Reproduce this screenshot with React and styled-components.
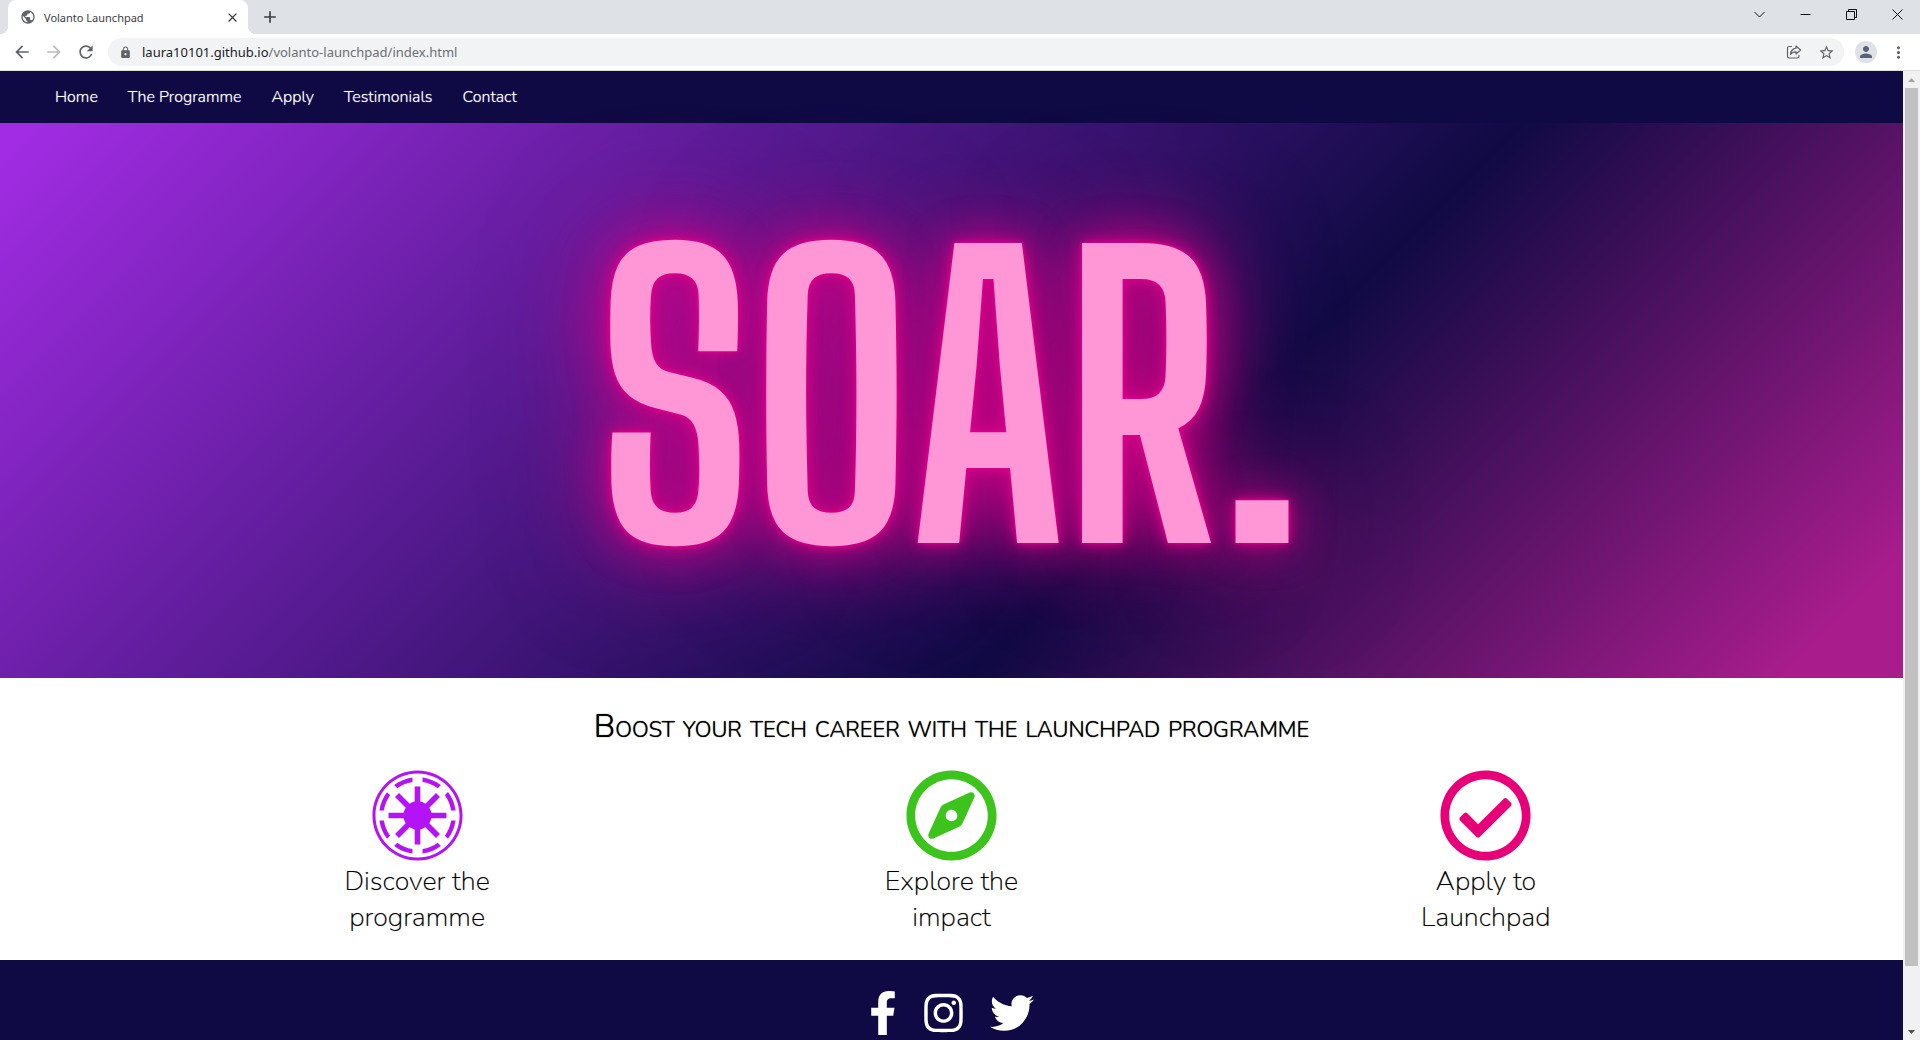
import React from 'react';
import styled, { createGlobalStyle } from 'styled-components';
import {
  MdPublic, MdClose, MdAdd, MdArrowBack, MdArrowForward, MdRefresh,
  MdLock, MdStarBorder, MdPerson, MdMoreVert,
} from 'react-icons/md';
import {
  FaGalacticRepublic, FaRegCompass, FaRegCheckCircle,
  FaFacebookF, FaInstagram, FaTwitter,
} from 'react-icons/fa';

const GlobalStyle = createGlobalStyle`
  *, *::before, *::after { box-sizing: border-box; }
  body { margin: 0; background: #fff; overflow: hidden; }
  button { border: 0; padding: 0; background: none; font: inherit; color: inherit; }
  svg { display: block; flex: none; }
`;

const uiFont = '"Noto Sans", "Open Sans", sans-serif';
const siteFont = 'Nunito, Lato, sans-serif';

const Browser = styled.div`
  display: flex;
  flex-direction: column;
  height: 100vh;
  font-family: ${uiFont};
`;

/* ---- window chrome ---- */

const TabStrip = styled.header`
  display: flex;
  flex: none;
  height: 34px;
  padding-left: 8px;
  background: #dee1e6;
`;

const Tab = styled.div`
  position: relative;
  display: flex;
  align-items: center;
  gap: 8px;
  width: 240px;
  padding: 0 8px 0 12px;
  border-radius: 8px 8px 0 0;
  background: #fff;
  color: #3c4043;
  font-size: 11px;

  &::before, &::after {
    content: '';
    position: absolute;
    bottom: 0;
    width: 8px;
    height: 8px;
  }
  &::before {
    left: -8px;
    background: radial-gradient(circle at 0 0, #dee1e6 8px, #fff 8px);
  }
  &::after {
    right: -8px;
    background: radial-gradient(circle at 100% 0, #dee1e6 8px, #fff 8px);
  }
`;

const TabTitle = styled.span`
  flex: 1;
  white-space: nowrap;
`;

const IconButton = styled.button`
  display: grid;
  place-items: center;
  flex: none;
  width: ${p => p.$size || 32}px;
  height: ${p => p.$size || 32}px;
  color: ${p => p.$color || '#5f6368'};
`;

const NewTab = styled(IconButton)`
  align-self: center;
  margin-left: 8px;
`;

const WindowControls = styled.div`
  display: flex;
  margin-left: auto;
`;

const WindowButton = styled.button`
  display: grid;
  place-items: center;
  width: 46px;
  height: 28px;
  color: #111;
`;

const Toolbar = styled.div`
  display: flex;
  flex: none;
  align-items: center;
  height: 37px;
  padding: 0 6px;
  border-bottom: 1px solid #dcdedc;
  background: #fff;
`;

const AddressBar = styled.div`
  display: flex;
  flex: 1;
  align-items: center;
  height: 28px;
  margin-left: 6px;
  padding: 0 2px 0 11px;
  border-radius: 14px;
  background: #f1f3f4;
  color: #5f6368;
`;

const Address = styled.p`
  flex: 1;
  margin: 0 0 0 10px;
  font-size: 13px;
  line-height: 20px;
  color: #6b6f74;
`;

const Host = styled.span`
  color: #202124;
`;

const Profile = styled.button`
  display: grid;
  place-items: center;
  width: 22px;
  height: 22px;
  margin: 0 5px 0 11px;
  border-radius: 50%;
  background: #dee1e6;
  color: #56617a;
`;

/* ---- page ---- */

const Viewport = styled.div`
  display: grid;
  grid-template-columns: minmax(0, 1fr) 17px;
  flex: 1;
  min-height: 0;
`;

const Page = styled.div`
  display: flex;
  flex-direction: column;
  overflow: hidden;
  font-family: ${siteFont};
`;

const Nav = styled.nav`
  flex: none;
  background: #100a44;
`;

const NavList = styled.ul`
  display: flex;
  gap: 30px;
  margin: 0;
  padding: 15px 55px;
  list-style: none;
`;

const NavLink = styled.a`
  display: block;
  color: #fff;
  font-size: 16px;
  font-weight: 300;
  line-height: 22px;
  text-decoration: none;
  text-shadow: 0 0 1px #ffffff99;
`;

const Hero = styled.section`
  display: flex;
  flex: none;
  justify-content: center;
  padding: 114px 0 117px;
  background: linear-gradient(135deg, #a22ce4 1%, #100a44 62%, #a81c8c 95%);
`;

const HeroTitle = styled.h1`
  margin: 0;
  color: #ff96d5;
  font-family: "Big Shoulders Display", "Bebas Neue", "Roboto Condensed", sans-serif;
  font-size: 375px;
  font-weight: 700;
  font-kerning: none;
  line-height: 324px;
  text-shadow:
    0 0 4px #e6008c,
    0 0 14px #e0008a,
    0 0 40px #d4008899,
    0 0 80px #d40088,
    0 0 120px #d4008899;
`;

const Features = styled.section`
  flex: none;
  padding: 27px 150px 24px;
  background: #fff;
  color: #000;
  text-align: center;
`;

const FeaturesTitle = styled.h2`
  margin: 0 0 20px;
  font-size: 32px;
  font-weight: 300;
  font-variant: small-caps;
  line-height: 44px;
  text-shadow: 0 0 1px #000;
`;

const FeatureGrid = styled.div`
  display: grid;
  grid-template-columns: repeat(3, 1fr);
  justify-items: center;
`;

const Feature = styled.a`
  display: flex;
  flex-direction: column;
  align-items: center;
  gap: 2px;
  width: 160px;
  color: #000;
  font-size: 27px;
  font-weight: 200;
  line-height: 36px;
  text-decoration: none;
  text-shadow: 0 0 1px #00000066;

  svg { width: 93px; height: 93px; color: ${p => p.$accent}; }
`;

const Footer = styled.footer`
  display: flex;
  flex: 1 0 auto;
  align-items: flex-start;
  justify-content: center;
  gap: 27px;
  padding: 31px 0;
  background: #100a44;
`;

const SocialLink = styled.a`
  color: #fff;
  svg { width: ${p => p.$width}px; height: 44px; }
`;

/* ---- scrollbar ---- */

const Scrollbar = styled.div`
  display: flex;
  flex-direction: column;
  align-items: center;
  background: #f1f1f1;
`;

const ScrollArrow = styled.div`
  display: grid;
  place-items: center;
  flex: none;
  width: 17px;
  height: 17px;
  color: ${p => (p.$disabled ? '#a3a3a3' : '#505050')};
`;

const Thumb = styled.div`
  flex: 77;
  width: 13px;
  background: #c1c1c1;
`;

const TrackRest = styled.div`
  flex: 5;
`;

const links = ['Home', 'The Programme', 'Apply', 'Testimonials', 'Contact'];

const features = [
  { text: 'Discover the programme', accent: '#b414f5', Icon: FaGalacticRepublic },
  { text: 'Explore the impact', accent: '#3cc31c', Icon: FaRegCompass },
  { text: 'Apply to Launchpad', accent: '#e80078', Icon: FaRegCheckCircle },
];

const socials = [
  { name: 'Facebook', width: 28, Icon: FaFacebookF },
  { name: 'Instagram', width: 39, Icon: FaInstagram },
  { name: 'Twitter', width: 44, Icon: FaTwitter },
];

const windowShapes = [
  { name: 'Search tabs', d: 'M0.5 3l5 5 5-5' },
  { name: 'Minimise', d: 'M0.5 5.5h10' },
  { name: 'Restore', d: 'M0.5 2.5h8v8h-8zM2.5 2.5v-2h8v8h-2' },
  { name: 'Close window', d: 'M0.5 0.5l10 10M10.5 0.5l-10 10' },
];

function ShareIcon() {
  return (
    <svg width="16" height="16" viewBox="0 0 16 16" fill="none" stroke="currentColor" strokeWidth="1.2" strokeLinejoin="round">
      <path d="M6 2.5H3.2A1.7 1.7 0 0 0 1.5 4.2v8.1A1.7 1.7 0 0 0 3.2 14h8.1a1.7 1.7 0 0 0 1.7-1.7V11" />
      <path d="M10 2l4.6 4L10 10V7.8C7.5 7.7 5.8 8.4 4.5 10.4 4.9 7 6.7 4.6 10 4.2z" />
    </svg>
  );
}

export default function App() {
  return (
    <Browser>
      <GlobalStyle />
      <TabStrip>
        <Tab>
          <MdPublic size={16} color="#5f6368" />
          <TabTitle>Volanto Launchpad</TabTitle>
          <IconButton $size={16} $color="#3c4043" aria-label="Close tab"><MdClose size={15} /></IconButton>
        </Tab>
        <NewTab $size={28} $color="#3c4043" aria-label="New tab"><MdAdd size={20} /></NewTab>
        <WindowControls>
          {windowShapes.map(s => (
            <WindowButton key={s.name} aria-label={s.name}>
              <svg width="11" height="11" viewBox="0 0 11 11" fill="none" stroke="currentColor"><path d={s.d} /></svg>
            </WindowButton>
          ))}
        </WindowControls>
      </TabStrip>
      <Toolbar>
        <IconButton aria-label="Back"><MdArrowBack size={20} /></IconButton>
        <IconButton $color="#babcbe" aria-label="Forward"><MdArrowForward size={20} /></IconButton>
        <IconButton aria-label="Reload"><MdRefresh size={20} /></IconButton>
        <AddressBar>
          <MdLock size={13} />
          <Address><Host>laura10101.github.io</Host>/volanto-launchpad/index.html</Address>
          <IconButton aria-label="Share"><ShareIcon /></IconButton>
          <IconButton aria-label="Bookmark"><MdStarBorder size={17} /></IconButton>
        </AddressBar>
        <Profile aria-label="Profile"><MdPerson size={18} /></Profile>
        <IconButton aria-label="Menu"><MdMoreVert size={19} /></IconButton>
      </Toolbar>
      <Viewport>
        <Page>
          <Nav>
            <NavList>
              {links.map(l => <li key={l}><NavLink href="#">{l}</NavLink></li>)}
            </NavList>
          </Nav>
          <Hero><HeroTitle>SOAR.</HeroTitle></Hero>
          <Features>
            <FeaturesTitle>Boost your tech career with the launchpad programme</FeaturesTitle>
            <FeatureGrid>
              {features.map(({ text, accent, Icon }) => (
                <Feature key={text} href="#" $accent={accent}><Icon />{text}</Feature>
              ))}
            </FeatureGrid>
          </Features>
          <Footer>
            {socials.map(({ name, width, Icon }) => (
              <SocialLink key={name} href="#" $width={width} aria-label={name}><Icon /></SocialLink>
            ))}
          </Footer>
        </Page>
        <Scrollbar aria-hidden="true">
          <ScrollArrow $disabled><svg width="7" height="4" viewBox="0 0 7 4" fill="currentColor"><path d="M0 4L3.5 0 7 4z" /></svg></ScrollArrow>
          <Thumb />
          <TrackRest />
          <ScrollArrow><svg width="7" height="4" viewBox="0 0 7 4" fill="currentColor"><path d="M0 0l3.5 4L7 0z" /></svg></ScrollArrow>
        </Scrollbar>
      </Viewport>
    </Browser>
  );
}
